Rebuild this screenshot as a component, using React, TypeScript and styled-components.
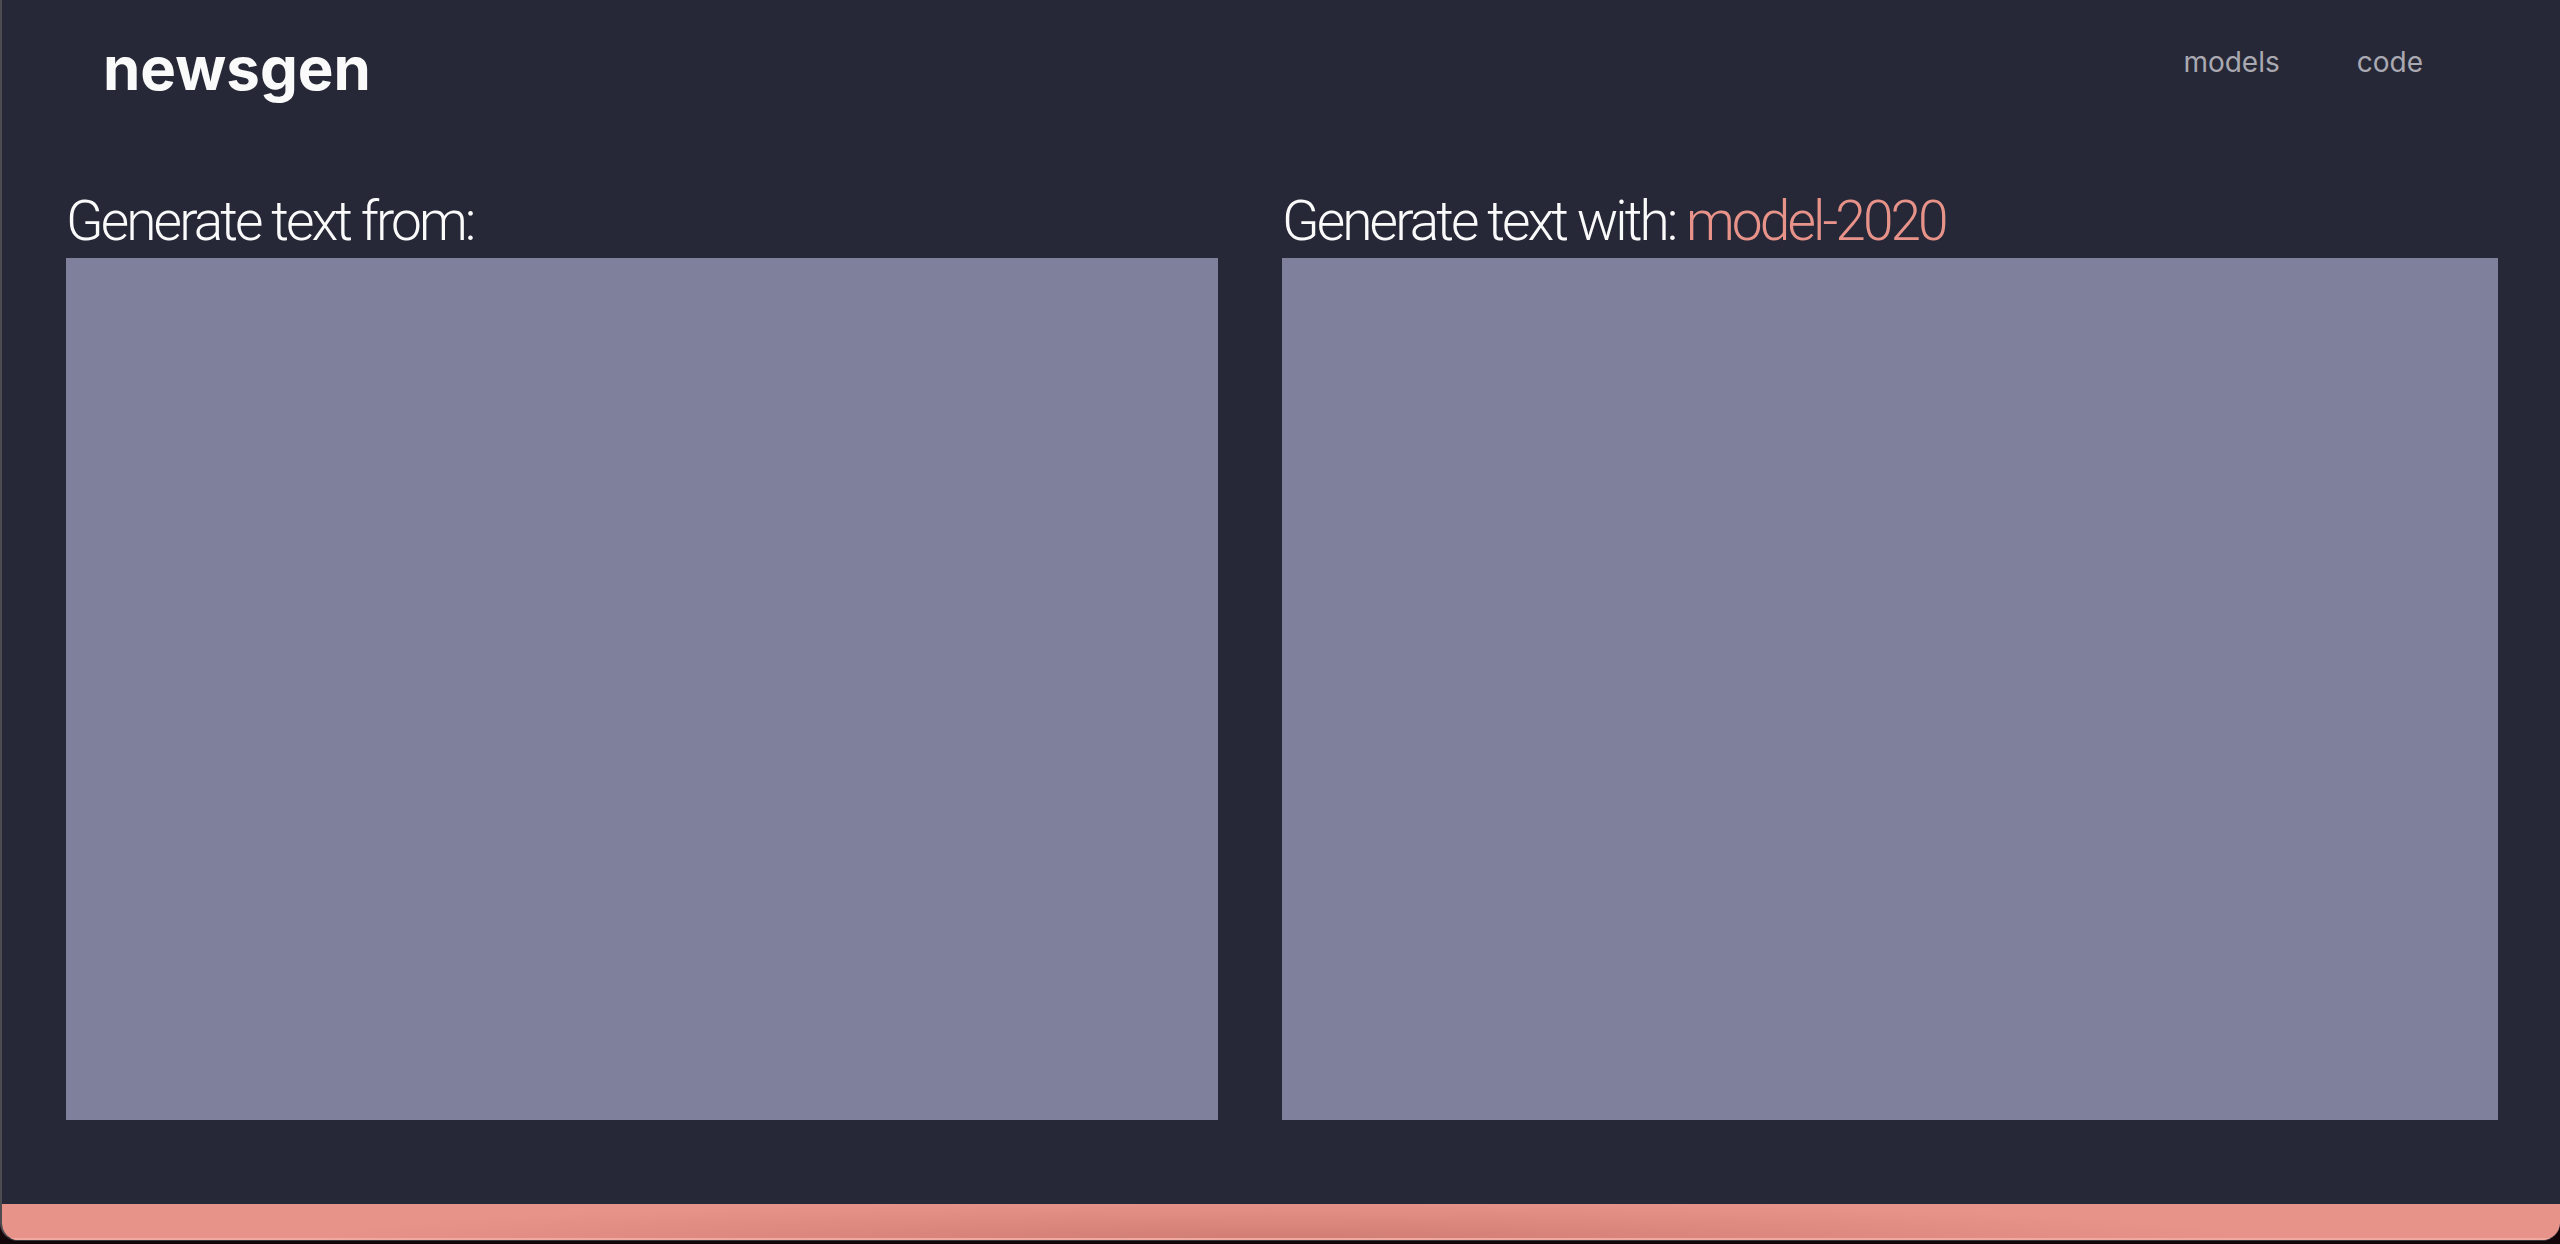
import React from "react";
import styled, { createGlobalStyle } from "styled-components";

const GlobalStyle = createGlobalStyle`
  html, body {
    margin: 0;
    padding: 0;
    background: #12060a;
    height: 100%;
  }
  #root {
    height: 100%;
  }
`;

function Column({ title, model }: { title: string; model?: string }) {
  return (
    <StyledColumn>
      <Heading>
        {title}
        {model && <Accent> {model}</Accent>}
      </Heading>
      <Panel />
    </StyledColumn>
  );
}

export default function App() {
  return (
    <>
      <GlobalStyle />
      <Window>
        <Header>
          <Logo>newsgen</Logo>
          <Nav>
            <NavLink>models</NavLink>
            <NavLink>code</NavLink>
          </Nav>
        </Header>
        <Main>
          <Column title="Generate text from:" />
          <Column title="Generate text with:" model="model-2020" />
        </Main>
        <Footer />
      </Window>
    </>
  );
}

const Window = styled.div`
  box-sizing: border-box;
  height: 1241px;
  display: flex;
  flex-direction: column;
  background: #262837;
  border-left: 2px solid #4b4b50;
  border-bottom: 1px solid #3a3a3e;
  border-radius: 0 0 18px 18px;
  overflow: hidden;
  font-family: Inter, "Noto Sans", sans-serif;
`;

const Header = styled.header`
  box-sizing: border-box;
  height: 194px;
  padding: 38px 137px 0 101px;
  display: flex;
  justify-content: space-between;
  align-items: flex-start;
`;

const Logo = styled.div`
  font-size: 60px;
  line-height: 60px;
  font-weight: 700;
  color: #fafafa;
`;

const Nav = styled.nav`
  display: flex;
  gap: 77px;
  margin-top: 10px;
`;

const NavLink = styled.a`
  font-size: 28px;
  line-height: 28px;
  color: #aaa9b2;
  cursor: pointer;
`;

const Main = styled.main`
  display: grid;
  grid-template-columns: 1152fr 1216fr;
  column-gap: 64px;
  padding: 0 62px 0 64px;
`;

const StyledColumn = styled.section`
  display: flex;
  flex-direction: column;
`;

const Heading = styled.h2`
  margin: 0;
  height: 64px;
  font-family: Roboto, "Noto Sans", sans-serif;
  font-size: 55px;
  line-height: 54px;
  font-weight: 300;
  letter-spacing: -2.9px;
  color: #fafafa;
  white-space: nowrap;
`;

const Accent = styled.span`
  color: #e8938a;
`;

const Panel = styled.div`
  height: 862px;
  background: #7f809b;
`;

const Footer = styled.footer`
  margin-top: auto;
  height: 34px;
  border-bottom: 2px solid #f0a9a1;
  background:
    radial-gradient(ellipse 38% 120% at 50% 110%, rgba(160, 80, 70, 0.35), rgba(160, 80, 70, 0) 100%),
    #e8938a;
`;
